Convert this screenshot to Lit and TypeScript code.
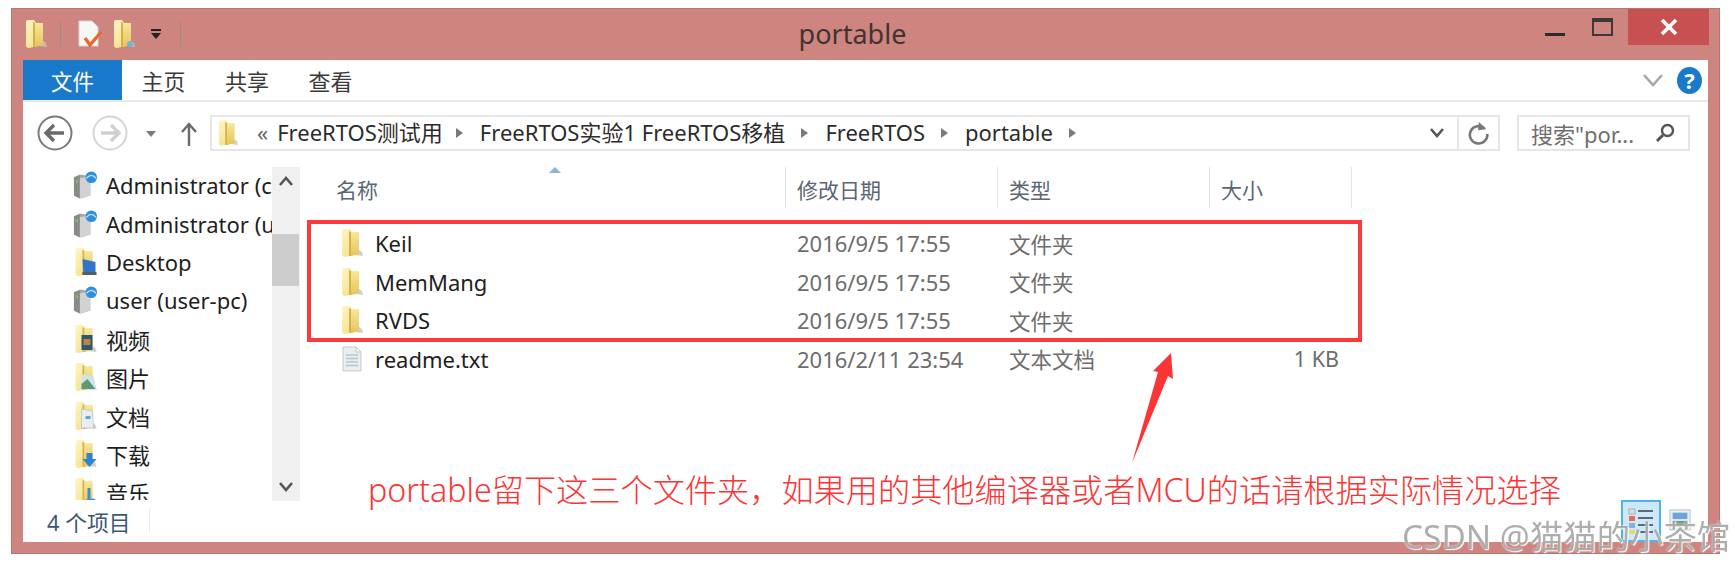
import { LitElement, html, svg, css } from "lit";
import { customElement } from "lit/decorators.js";

const folder = (w = 24, h = 30, extra: unknown = "") => html`<svg class="ico" width=${w} height=${h} viewBox="0 0 24 30">
  <defs>
    <linearGradient id="fy" x1="0" y1="0" x2="1" y2="1"><stop offset="0" stop-color="#fff6c4"/><stop offset="1" stop-color="#f2d978"/></linearGradient>
    <linearGradient id="fz" x1="0" y1="0" x2="0" y2="1"><stop offset="0" stop-color="#f8e596"/><stop offset="1" stop-color="#e6c45c"/></linearGradient>
  </defs>
  <path d="M14 27 L23 28 L22 24 L18 21 Z" fill="#c4c4c4" opacity=".8"/>
  <path d="M2 3 Q2 1 4 1 H10 L12 4 H19 V26 L5 29 Q2 29 2 26 Z" fill="url(#fy)"/>
  <path d="M9 3 L11 4 V28 L9 28 Z" fill="#d4b34b"/>
  <path d="M11 5 H19 V26 L11 28 Z" fill="url(#fz)"/>
  ${extra}
</svg>`;

const server = () => html`<svg class="ico" width="26" height="30" viewBox="0 0 26 30">
  <path d="M1 7 L7 4 L18 6 L18 26 L8 29 L1 26 Z" fill="#a6a6a6"/>
  <path d="M7 8 L18 6 L18 26 L7 29 Z" fill="#d2d2d2"/>
  <path d="M1 7 L7 5 L7 29 L1 26 Z" fill="#8a8a8a"/>
  <rect x="3" y="10" width="2" height="3" fill="#7ec46a"/>
  <circle cx="19" cy="7" r="6" fill="#2f8fdc"/>
  <path d="M14 8 Q19 2 24 8" fill="none" stroke="#bcdff7" stroke-width="1.4"/>
</svg>`;

const libExtra: Record<string, unknown> = {
  desktop: svg`<path d="M9 12 L22 15 L22 27 L10 27 Z" fill="#2f76c9"/><path d="M9 25 L23 25 L23 28 L9 28 Z" fill="#555e66"/>`,
  video: svg`<rect x="8" y="11" width="11" height="15" fill="#2c5877"/><rect x="10" y="15" width="7" height="6" fill="#c5803a"/>`,
  pic: svg`<path d="M8 12 L20 14 L23 28 L8 27 Z" fill="#cfe3e8"/><path d="M8 22 L14 17 L22 27 L8 27 Z" fill="#5d9a73"/>`,
  doc: svg`<path d="M8 8 L19 10 L20 27 L8 27 Z" fill="#e9eef2" stroke="#a9b7bf" stroke-width=".6"/><rect x="12" y="15" width="5" height="3" fill="#5ca8c9"/>`,
  down: svg`<path d="M13 14 H19 V20 H23 L16 28 L9 20 H13 Z" fill="#2f83d2"/>`,
  music: svg`<path d="M14 11 L17 11 L17 22 Q22 20 23 25 Q20 29 12 28 Q10 24 14 22 Z" fill="#3f8fcb"/>`,
};

const side: [string, () => unknown][] = [
  ["Administrator (c", server],
  ["Administrator (u", server],
  ["Desktop", () => folder(26, 30, libExtra.desktop)],
  ["user (user-pc)", server],
  ["视频", () => folder(26, 30, libExtra.video)],
  ["图片", () => folder(26, 30, libExtra.pic)],
  ["文档", () => folder(26, 30, libExtra.doc)],
  ["下载", () => folder(26, 30, libExtra.down)],
  ["音乐", () => folder(26, 30, libExtra.music)],
];

const files = [
  ["Keil", "2016/9/5 17:55", "文件夹", ""],
  ["MemMang", "2016/9/5 17:55", "文件夹", ""],
  ["RVDS", "2016/9/5 17:55", "文件夹", ""],
  ["readme.txt", "2016/2/11 23:54", "文本文档", "1 KB"],
];

const txtIcon = () => html`<svg class="ico" width="24" height="26" viewBox="0 0 24 26">
  <path d="M3 1 H16 L21 6 V25 H3 Z" fill="#e9eef1" stroke="#c2cace"/>
  <path d="M16 1 V6 H21 Z" fill="#fff" stroke="#c2cace"/>
  <path d="M6 9 H18 M6 12.5 H18 M6 16 H18 M6 19.5 H18" stroke="#b9c7d1" stroke-width="1.4"/>
</svg>`;

const crumbs = ["FreeRTOS测试用", "FreeRTOS实验1 FreeRTOS移植", "FreeRTOS", "portable"];

@customElement("app-root")
export class AppRoot extends LitElement {
  static styles = css`
    :host { display: block; width: 1735px; height: 565px; background: #fff; overflow: hidden;
      font-family: "Noto Sans", "Noto Sans CJK SC", sans-serif; color: #1e1e1e; }
    .page { padding: 8px 15px 0 11px; }
    .window { position: relative; height: 546px; box-sizing: border-box; background: #cf857f;
      border: 1px solid #b5776f; padding: 0 11px 11px; display: flex; flex-direction: column; filter: blur(0.55px); }
    .ico { flex: none; display: block; }
    .title { height: 51px; display: flex; flex: none; position: relative; align-items: flex-start; }
    .qa { display: flex; align-items: center; height: 30px; margin-top: 10px; margin-left: 1px; }
    .qa .bar { width: 1px; height: 26px; background: #9e8a86; }
    .caption { position: absolute; left: 0; right: 26px; top: 6px; text-align: center; font-size: 27px; line-height: 38px; color: #3f3431; }
    .controls { margin-left: auto; display: flex; align-items: flex-start; position: relative; }
    .min { width: 20px; height: 3px; background: #2b2b2b; margin: 24px 27px 0 0; }
    .max { width: 21px; height: 18px; box-sizing: border-box; border: 2px solid #3a3a3a; border-top-width: 4px; margin: 9px 15px 0 0; }
    .close { width: 81px; height: 36px; background: #c75050; display: flex; align-items: center; justify-content: center; margin-right: -1px; }
    .body { flex: 1; background: #fff; display: flex; flex-direction: column; min-height: 0; }
    .ribbon { height: 42px; box-sizing: border-box; flex: none; display: flex; align-items: center; gap: 39.5px; border-bottom: 2px solid #e9e9e9; font-size: 22px; color: #3a3a3a; }
    .file { width: 99px; height: 40px; background: #1979ca; color: #fff; font-size: 21.5px; display: flex; align-items: center; justify-content: center; margin-right: -20px; }
    .ribbon .right { margin-left: auto; display: flex; align-items: center; gap: 14px; padding-right: 6px; }
    .help { width: 25px; height: 27px; border-radius: 50%; background: #1979ca; color: #fff; font-weight: 700; font-size: 22px; display: flex; align-items: center; justify-content: center; line-height: 1; }
    .nav { height: 65px; flex: none; display: flex; align-items: flex-start; padding: 13px 0 0 14px; box-sizing: border-box; }
    .circle { width: 36px; height: 36px; flex: none; }
    .addr { margin-left: 13px; width: 1290px; height: 36px; box-sizing: border-box; border: 2px solid #e6e6e6; display: flex; align-items: center; padding-left: 5px; font-size: 22px; line-height: 32px; color: #2b2b2b; white-space: nowrap; }
    .crumbtext { position: relative; top: -1px; }
    .laquo { margin-left: 18px; margin-right: 9px; color: #666; position: relative; top: -1px; }
    .sep { flex: none; width: 0; height: 0; border-left: 7px solid #7a7a7a; border-top: 5px solid transparent; border-bottom: 5px solid transparent; margin: 0 17px 0 16px; }
    .sep:first-of-type { margin-left: 13px; }
    .addr .end { margin-left: auto; display: flex; align-items: center; height: 100%; }
    .addr .chev { width: 40px; display: flex; justify-content: center; }
    .addr .refresh { width: 41px; height: 100%; border-left: 2px solid #e6e6e6; display: flex; align-items: center; justify-content: center; box-sizing: border-box; }
    .search { margin-left: 17px; width: 173px; height: 36px; box-sizing: border-box; border: 2px solid #e6e6e6; display: flex; align-items: center; justify-content: space-between; padding: 0 13px 0 12px; font-size: 22px; color: #6f6f6f; white-space: nowrap; }
    .main { height: 333px; flex: none; display: flex; margin-top: 1px; margin-bottom: -1px; }
    .sidebar { width: 249px; flex: none; overflow: hidden; height: 333px; margin-top: -1px; }
    .srow { height: 38.4px; box-sizing: border-box; display: flex; align-items: center; padding: 0 0 2px 50px; white-space: nowrap; font-size: 22px; }
    .srow .ico { margin-right: 8px; width: 25px; }
    .scroll { width: 28px; flex: none; background: #f0f0f0; position: relative; display: flex; flex-direction: column; align-items: center; justify-content: space-between; padding: 8px 0; box-sizing: border-box; margin-top: -1px; }
    .thumb { position: absolute; left: 0; right: 1px; top: 67px; height: 52px; background: #cdcdcd; }
    .list { flex: 1; position: relative; margin-top: -1px; }
    .grid { display: grid; grid-template-columns: 486px 212px 212px 142px; }
    .hdr { height: 41px; font-size: 21px; color: #5a6675; display: flex; align-items: flex-start; padding: 7px 0 0 11px; box-sizing: border-box; border-right: 1px solid #dfe6ee; }
    .hdr.first { padding-left: 36px; position: relative; }
    .sort { position: absolute; left: 249px; top: 0; width: 0; height: 0; border-left: 6px solid transparent; border-right: 6px solid transparent; border-bottom: 6px solid #8db3d8; }
    .rows { margin-top: 16px; }
    .cell { height: 38.5px; display: flex; align-items: center; padding-left: 11px; font-size: 21.5px; color: #6d6d6d; white-space: nowrap; }
    .cell.date { font-size: 22px; }
    .cell.name { padding-left: 40px; font-size: 22px; color: #1e1e1e; gap: 11px; }
    .cell.size { justify-content: flex-end; padding-right: 13px; padding-left: 0; }
    .status { flex: 1; display: flex; align-items: center; position: relative; padding-left: 24px; font-size: 21.8px; color: #3f5872; }
    .status .dv { width: 1px; height: 24px; background: #ececec; margin-left: 18px; }
    .views { margin-left: auto; display: flex; align-items: flex-start; gap: 8px; align-self: flex-start; margin-right: 17px; }
    .vbtn { width: 40px; height: 42px; box-sizing: border-box; border: 2px solid #4fb2e8; background: #cde8f7; display: flex; align-items: center; justify-content: center; }
    /* annotations laid over the screenshot */
    .redbox { position: absolute; left: 295px; top: 211px; width: 1055px; height: 122px; box-sizing: border-box; border: 4px solid #fb3b3b; }
    .arrow { position: absolute; left: 1110px; top: 340px; }
    .note { position: absolute; left: 356px; top: 460px; font-size: 32.2px; color: #fb3535; white-space: nowrap; font-weight: 300; line-height: 42px; }
    .wm { position: absolute; left: 1390px; top: 505px; font-size: 33.4px; line-height: 44px; color: rgba(120,120,120,.6); text-shadow: 0 0 2px #fff, 1px 1px 1px #fff; white-space: nowrap; }
  `;

  render() {
    const chevSm = (d: string, c = "#555") => html`<svg width="18" height="12" viewBox="0 0 18 12"><path d=${d} fill="none" stroke=${c} stroke-width="2.6"/></svg>`;
    return html`<div class="page"><div class="window">
      <div class="title">
        <div class="qa">
          ${folder(24, 30)}
          <div class="bar" style="margin-left:12px"></div>
          <svg class="ico" style="margin-left:16px" width="26" height="30" viewBox="0 0 26 30">
            <path d="M2 2 H15 L21 8 V27 H2 Z" fill="#f7f7f7" stroke="#d8d2d0"/>
            <path d="M8 19 L13 26 L24 13" fill="none" stroke="#e9692c" stroke-width="3.4"/>
          </svg>
          <div style="margin-left:9px">${folder(24, 30, svg`<circle cx="18" cy="25" r="3" fill="#6cb6d8"/>`)}</div>
          <svg class="ico" style="margin-left:14px" width="12" height="12" viewBox="0 0 12 12"><rect x="1" y="1" width="10" height="2" fill="#222"/><path d="M1 5 H11 L6 11 Z" fill="#222"/></svg>
          <div class="bar" style="margin-left:18px"></div>
        </div>
        <div class="caption">portable</div>
        <div class="controls">
          <div class="min"></div>
          <div class="max"></div>
          <div class="close"><svg width="18" height="18" viewBox="0 0 18 18"><path d="M2 2 L16 16 M16 2 L2 16" stroke="#fff" stroke-width="3.6"/></svg></div>
        </div>
      </div>
      <div class="body">
        <div class="ribbon">
          <div class="file">文件</div><span>主页</span><span>共享</span><span>查看</span>
          <div class="right">
            <svg width="20" height="14" viewBox="0 0 20 14"><path d="M1 2 L10 12 L19 2" fill="none" stroke="#a8a8a8" stroke-width="2.6"/></svg>
            <div class="help">?</div>
          </div>
        </div>
        <div class="nav">
          <svg class="circle" viewBox="0 0 36 36"><circle cx="18" cy="18" r="16.5" fill="#fff" stroke="#7a7a7a" stroke-width="2"/><path d="M27 18 H10 M17 10 L9 18 L17 26" fill="none" stroke="#6a6a6a" stroke-width="3.4"/></svg>
          <svg class="circle" style="margin-left:19px" viewBox="0 0 36 36"><circle cx="18" cy="18" r="16.5" fill="#fff" stroke="#d5d5d5" stroke-width="2"/><path d="M9 18 H26 M19 10 L27 18 L19 26" fill="none" stroke="#cfcfcf" stroke-width="3.4"/></svg>
          <svg class="ico" style="margin:16px 0 0 18px" width="10" height="6" viewBox="0 0 10 6"><path d="M0 0 H10 L5 6 Z" fill="#7a7a7a"/></svg>
          <svg class="ico" style="margin:7px 0 0 25px" width="16" height="24" viewBox="0 0 16 24"><path d="M8 24 V3 M1 10 L8 2 L15 10" fill="none" stroke="#6a6a6a" stroke-width="2.4"/></svg>
          <div class="addr">
            ${folder(22, 28)}
            <span class="laquo">«</span>
            ${crumbs.map((c) => html`<span class="crumbtext">${c}</span><i class="sep"></i>`)}
            <div class="end">
              <div class="chev">${chevSm("M3 2 L9 9 L15 2")}</div>
              <div class="refresh"><svg width="22" height="26" viewBox="0 0 24 28"><path d="M18 9 A9.5 9.5 0 1 0 21 15" fill="none" stroke="#777" stroke-width="2.8"/><path d="M12 2 L20 10 L11 11 Z" fill="#777"/></svg></div>
            </div>
          </div>
          <div class="search"><span>搜索"por...</span>
            <svg width="20" height="20" viewBox="0 0 20 20"><circle cx="12.5" cy="7.5" r="5.5" fill="none" stroke="#555" stroke-width="2.4"/><path d="M8 12 L2 18" stroke="#555" stroke-width="3"/></svg>
          </div>
        </div>
        <div class="main">
          <div class="sidebar">
            ${side.map(([t, i]) => html`<div class="srow">${i()}<span>${t}</span></div>`)}
          </div>
          <div class="scroll">
            <svg width="18" height="12" viewBox="0 0 18 12"><path d="M3 10 L9 3 L15 10" fill="none" stroke="#555" stroke-width="2.6"/></svg>
            <div class="thumb"></div>
            ${chevSm("M3 2 L9 9 L15 2")}
          </div>
          <div class="list">
            <div class="grid">
              <div class="hdr first">名称<i class="sort"></i></div>
              <div class="hdr">修改日期</div>
              <div class="hdr">类型</div>
              <div class="hdr">大小</div>
            </div>
            <div class="grid rows">
              ${files.map(([n, d, t, s], i) => html`
                <div class="cell name">${i < 3 ? folder(24, 30) : txtIcon()}<span>${n}</span></div>
                <div class="cell date">${d}</div>
                <div class="cell">${t}</div>
                <div class="cell size">${s}</div>`)}
            </div>
          </div>
        </div>
        <div class="status">
          <span>4 个项目</span><div class="dv"></div>
          <div class="views">
            <div class="vbtn"><svg width="26" height="28" viewBox="0 0 26 28">
              <rect x="1" y="2" width="6" height="5" fill="#ddd" stroke="#999" stroke-width=".7"/><rect x="1" y="9" width="6" height="5" fill="#e86a5a"/><rect x="1" y="16" width="6" height="5" fill="#7fb2e0"/><rect x="1" y="23" width="6" height="4" fill="#e6d77a"/>
              <path d="M10 4 H25 M10 11 H25 M10 18 H25 M10 25 H25" stroke="#5a6a78" stroke-width="2"/></svg></div>
            <svg style="margin-top:9px" width="22" height="22" viewBox="0 0 24 24"><rect x="1" y="1" width="22" height="22" fill="#e8eef3" stroke="#b5bfc7"/><rect x="4" y="4" width="16" height="7" fill="#6aa6dc"/><rect x="4" y="13" width="16" height="6" fill="#6f9a7c"/></svg>
          </div>
        </div>
      </div>
      <div class="redbox"></div>
      <svg class="arrow" width="80" height="130" viewBox="0 0 80 130"><path d="M49 4 L31 22 L36 23 L10 114 L46 27 L51 30 Z" fill="#fb3535"/></svg>
      <div class="note">portable留下这三个文件夹，如果用的其他编译器或者MCU的话请根据实际情况选择</div>
      <div class="wm">CSDN @猫猫的小茶馆</div>
    </div></div>`;
  }
}
